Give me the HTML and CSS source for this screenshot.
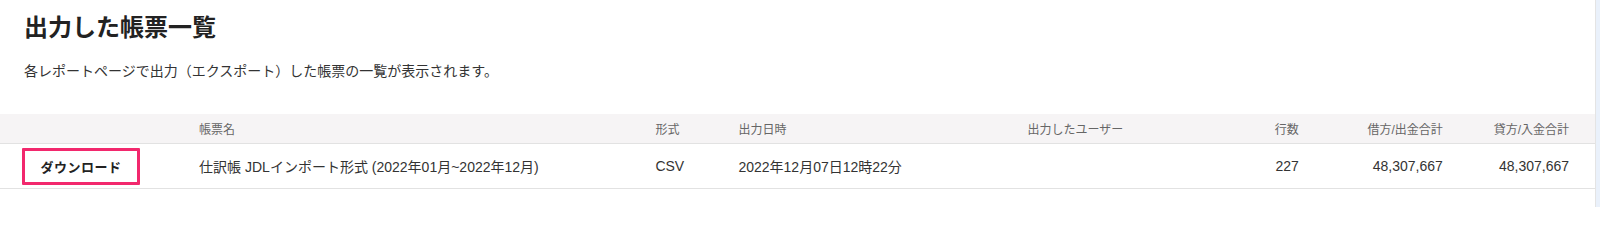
FILE: index.html
```html
<!DOCTYPE html>
<html lang="ja">
<head>
<meta charset="utf-8">
<title>出力した帳票一覧</title>
<link rel="stylesheet" href="styles.css">
</head>
<body>
<div class="layout">
  <main class="main">
    <header class="page-head">
      <h1 class="title">出力した帳票一覧</h1>
      <p class="desc">各レポートページで出力（エクスポート）した帳票の一覧が表示されます。</p>
    </header>
    <table class="reports">
      <colgroup>
        <col class="c-btn">
        <col class="c-name">
        <col class="c-fmt">
        <col class="c-date">
        <col class="c-user">
        <col class="c-rows">
        <col class="c-debit">
        <col class="c-credit">
      </colgroup>
      <thead>
        <tr>
          <th></th>
          <th>帳票名</th>
          <th>形式</th>
          <th>出力日時</th>
          <th>出力したユーザー</th>
          <th class="num">行数</th>
          <th class="num">借方/出金合計</th>
          <th class="num last">貸方/入金合計</th>
        </tr>
      </thead>
      <tbody>
        <tr>
          <td class="btn-cell"><button class="dl-btn" type="button">ダウンロード</button></td>
          <td>仕訳帳 JDLインポート形式 (2022年01月~2022年12月)</td>
          <td>CSV</td>
          <td>2022年12月07日12時22分</td>
          <td></td>
          <td class="num">227</td>
          <td class="num">48,307,667</td>
          <td class="num last">48,307,667</td>
        </tr>
      </tbody>
    </table>
  </main>
  <aside class="side"></aside>
</div>
</body>
</html>
```

FILE: styles.css
```css
html, body {
  margin: 0;
  padding: 0;
  background: #ffffff;
}
body {
  font-family: "Liberation Sans", "Noto Sans CJK JP", sans-serif;
  color: #333333;
}
.layout {
  display: flex;
  width: 1600px;
  height: 207px;
}
.main {
  flex: 1;
  min-width: 0;
  background: #ffffff;
  border-right: 1px solid #e4e4e4;
}
.side {
  width: 4px;
  background: #eaf1fb;
}
.page-head {
  padding: 13px 0 0 24px;
}
.title {
  margin: 0;
  font-size: 24px;
  line-height: 30px;
  font-weight: bold;
  color: #222222;
}
.desc {
  margin: 18px 0 0;
  font-size: 14px;
  line-height: 20px;
  color: #333333;
}
.reports {
  margin-top: 33px;
  width: 100%;
  border-collapse: collapse;
  table-layout: fixed;
}
.c-btn { width: 199px; }
.c-name { width: 456px; }
.c-fmt { width: 83px; }
.c-date { width: 289px; }
.c-user { width: 173px; }
.c-rows { width: 98px; }
.c-debit { width: 144px; }
.c-credit { width: 152px; }
.reports th {
  background: #f6f4f5;
  height: 29px;
  padding: 0;
  font-size: 12px;
  font-weight: normal;
  color: #666666;
  text-align: left;
  border-bottom: 1px solid #e2e2e2;
  white-space: nowrap;
}
.reports td {
  height: 44px;
  padding: 0;
  font-size: 14px;
  color: #333333;
  border-bottom: 1px solid #e2e2e2;
  white-space: nowrap;
}
.reports .num {
  text-align: right;
}
.reports .last {
  padding-right: 26px;
}
.btn-cell {
  padding-left: 22px !important;
}
.dl-btn {
  display: flex;
  align-items: center;
  justify-content: center;
  width: 118px;
  height: 37px;
  box-sizing: border-box;
  border: 3px solid #f2286d;
  background: #ffffff;
  border-radius: 1px;
  font-family: "Liberation Sans", "Noto Sans CJK JP", sans-serif;
  font-size: 13px;
  font-weight: bold;
  color: #222222;
  letter-spacing: 0.5px;
  padding: 0;
  cursor: pointer;
}
```
